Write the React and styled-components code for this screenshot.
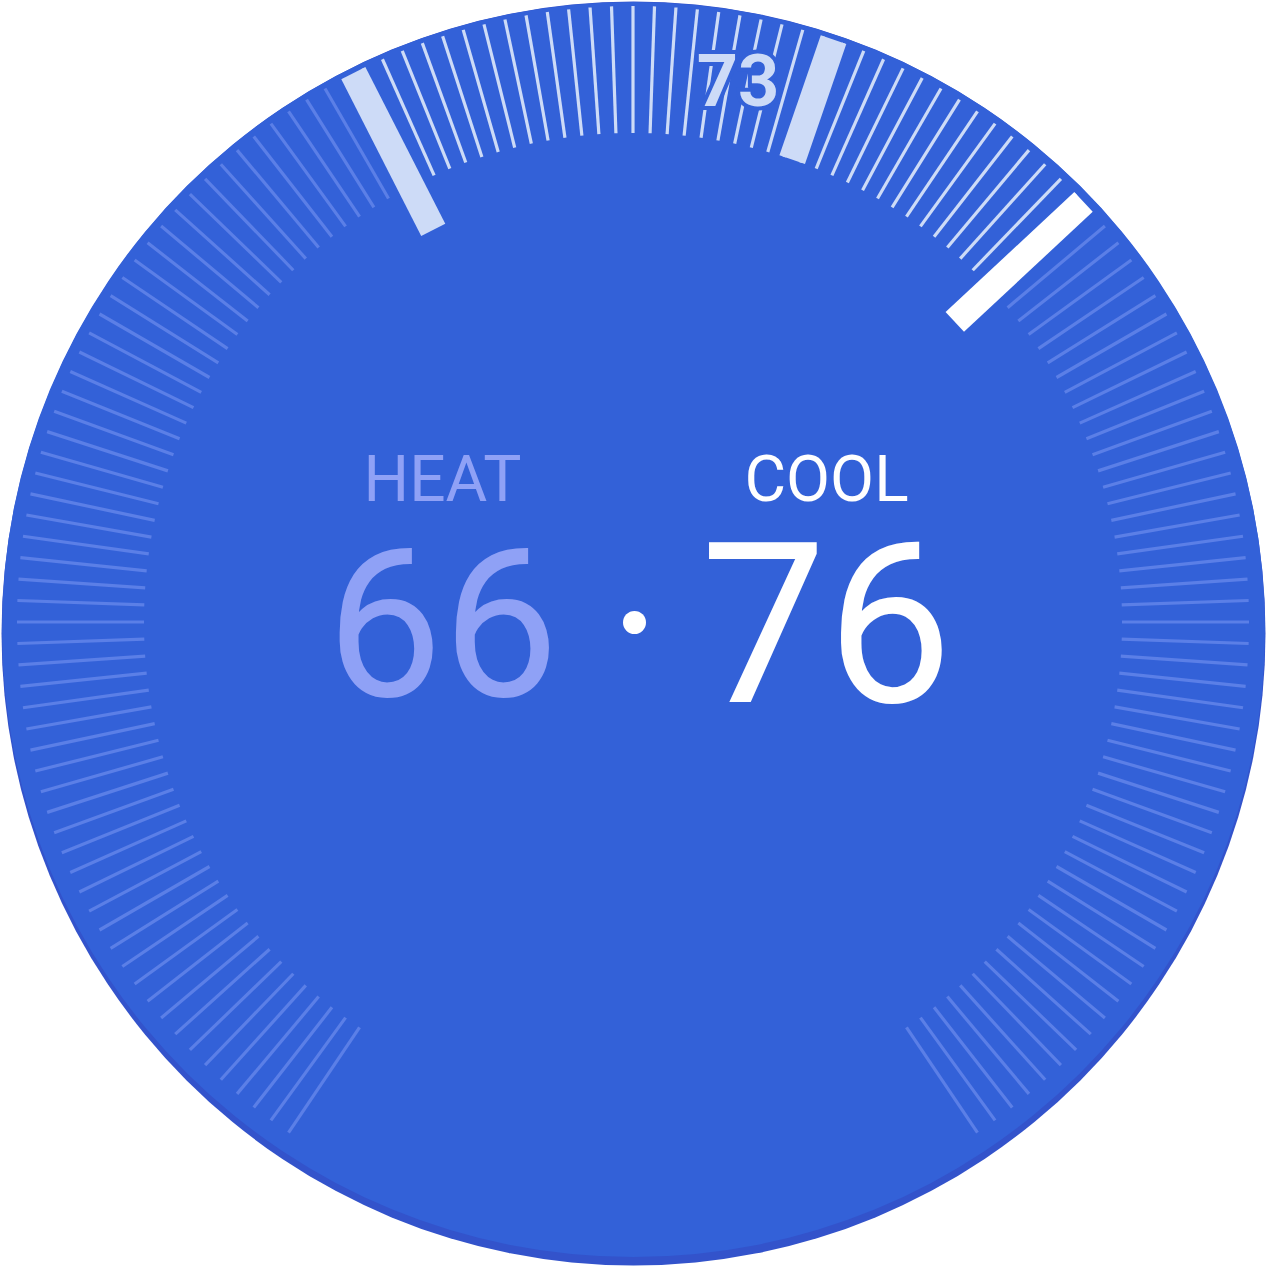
import React from 'react'
import styled, { createGlobalStyle } from 'styled-components'

// dial geometry, measured off the 1268px face
const SIZE = 1268
const CX = 633
const CY = 622
const OUTER = 616
const INNER = 489
const LARGE_INNER = 440

const HEAT_ANGLE = -27
const AMBIENT_ANGLE = 19
const COOL_ANGLE = 47

const polar = (angle, r) => {
  const rad = (angle * Math.PI) / 180
  return [CX + r * Math.sin(rad), CY - r * Math.cos(rad)]
}

const barPoints = (angle, inner, width) => {
  const rad = (angle * Math.PI) / 180
  const nx = Math.cos(rad) * (width / 2)
  const ny = Math.sin(rad) * (width / 2)
  const [ox, oy] = polar(angle, OUTER)
  const [ix, iy] = polar(angle, inner)
  return [
    [ox - nx, oy - ny],
    [ox + nx, oy + ny],
    [ix + nx, iy + ny],
    [ix - nx, iy - ny],
  ].map(p => p.map(v => v.toFixed(2)).join(',')).join(' ')
}

const ticks = []
for (let a = -146; a <= 146; a += 2) ticks.push(a)

const GlobalStyle = createGlobalStyle`
  body {
    margin: 0;
    background: #ffffff;
    font-family: Roboto, 'Liberation Sans', sans-serif;
  }
`

const Dial = styled.div`
  position: relative;
  width: ${SIZE}px;
  height: ${SIZE}px;
`

const Face = styled.svg`
  display: block;
`

const Tick = styled.line`
  stroke: ${p => (p.$active ? '#cddbf7' : '#5b7fe7')};
  stroke-width: 3.2;
`

const Bar = styled.polygon`
  fill: ${p => p.$color};
`

const Ambient = styled.text`
  font-family: Roboto, 'Liberation Sans', sans-serif;
  font-weight: 700;
  font-size: 72px;
  fill: #cddbf7;
  stroke: #3361d8;
  stroke-width: 8px;
  paint-order: stroke;
`

const Readout = styled.div`
  position: absolute;
  inset: 0;
  display: flex;
  justify-content: center;
  align-items: flex-start;
  padding-top: 448px;
  pointer-events: none;
`

const Grid = styled.div`
  display: grid;
  grid-template-columns: 240px 144px 240px;
  grid-template-rows: 64px 179px;
  row-gap: 24px;
  justify-items: center;
  align-items: center;
  margin-left: 1px;
`

const Label = styled.div`
  font-size: 64px;
  line-height: 64px;
  color: ${p => (p.$active ? '#ffffff' : '#8fa1f6')};
  grid-row: 1;
  grid-column: ${p => p.$col};
`

const Value = styled.div`
  font-size: ${p => (p.$active ? 224 : 207)}px;
  line-height: 0.8;
  color: ${p => (p.$active ? '#ffffff' : '#8fa1f6')};
  grid-row: 2;
  grid-column: ${p => p.$col};
`

const Dot = styled.span`
  grid-row: 2;
  grid-column: 2;
  width: 23px;
  height: 23px;
  margin-bottom: 6px;
  border-radius: 50%;
  background: #ffffff;
`

const App = () => {
  const [ax] = polar(AMBIENT_ANGLE, 0)
  return (
    <Dial>
      <GlobalStyle />
      <Face width={SIZE} height={SIZE} viewBox={`0 0 ${SIZE} ${SIZE}`}>
        <circle cx={633.5} cy={633.5} r={632} fill="#3353cb" />
        <ellipse cx={633.5} cy={629.5} rx={631.5} ry={627.5} fill="#3361d8" />
        {ticks.map(a => {
          const [x1, y1] = polar(a, OUTER)
          const [x2, y2] = polar(a, INNER)
          return (
            <Tick key={a} x1={x1} y1={y1} x2={x2} y2={y2}
              $active={a > HEAT_ANGLE && a < COOL_ANGLE} />
          )
        })}
        <Bar points={barPoints(HEAT_ANGLE, LARGE_INNER, 27)} $color="#cddbf7" />
        <Bar points={barPoints(AMBIENT_ANGLE, INNER, 27)} $color="#cddbf7" />
        <Bar points={barPoints(COOL_ANGLE, LARGE_INNER, 27)} $color="#ffffff" />
        <Ambient x={ax + 105} y={106} textAnchor="middle">73</Ambient>
      </Face>
      <Readout>
        <Grid>
          <Label $col={1}>HEAT</Label>
          <Label $col={3} $active>COOL</Label>
          <Value $col={1}>66</Value>
          <Dot />
          <Value $col={3} $active>76</Value>
        </Grid>
      </Readout>
    </Dial>
  )
}

export default App
